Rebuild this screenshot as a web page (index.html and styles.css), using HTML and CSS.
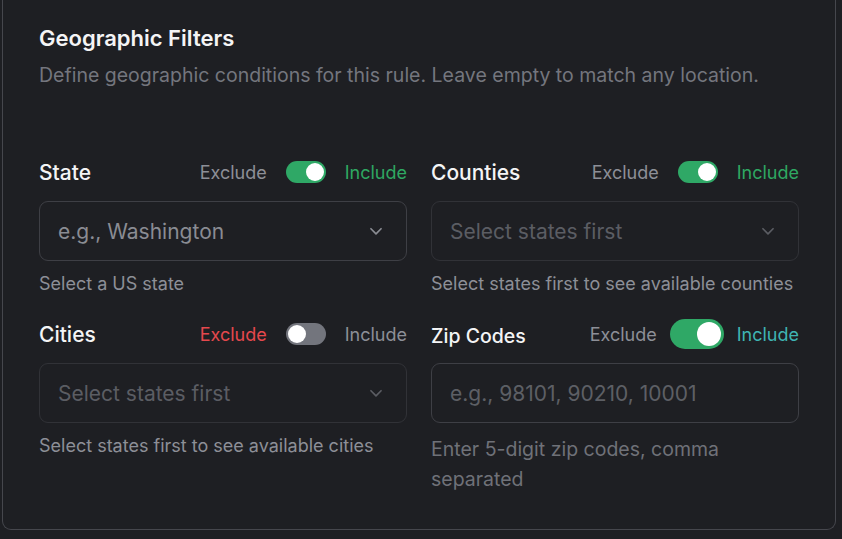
FILE: index.html
```html
<!DOCTYPE html>
<html lang="en">
<head>
<meta charset="utf-8">
<title>Geographic Filters</title>
<link rel="stylesheet" href="styles.css">
</head>
<body>
<section class="card">
  <header class="card-head">
    <h2 class="title">Geographic Filters</h2>
    <p class="subtitle">Define geographic conditions for this rule. Leave empty to match any location.</p>
  </header>
  <div class="grid">
    <div class="field">
      <div class="field-head">
        <span class="label">State</span>
        <div class="mode">
          <span class="mode-text">Exclude</span>
          <span class="toggle on"><span class="thumb"></span></span>
          <span class="mode-text green">Include</span>
        </div>
      </div>
      <div class="select">
        <span class="placeholder">e.g., Washington</span>
        <svg class="chev" width="18" height="18" viewBox="0 0 16 16" fill="none"><path d="M3.5 6l4.5 4.5L12.5 6" stroke="currentColor" stroke-width="1.5" stroke-linecap="round" stroke-linejoin="round"/></svg>
      </div>
      <p class="help">Select a US state</p>
    </div>

    <div class="field">
      <div class="field-head">
        <span class="label">Counties</span>
        <div class="mode">
          <span class="mode-text">Exclude</span>
          <span class="toggle on"><span class="thumb"></span></span>
          <span class="mode-text green">Include</span>
        </div>
      </div>
      <div class="select disabled">
        <span class="placeholder">Select states first</span>
        <svg class="chev" width="18" height="18" viewBox="0 0 16 16" fill="none"><path d="M3.5 6l4.5 4.5L12.5 6" stroke="currentColor" stroke-width="1.5" stroke-linecap="round" stroke-linejoin="round"/></svg>
      </div>
      <p class="help">Select states first to see available counties</p>
    </div>

    <div class="field">
      <div class="field-head">
        <span class="label">Cities</span>
        <div class="mode">
          <span class="mode-text red">Exclude</span>
          <span class="toggle off"><span class="thumb"></span></span>
          <span class="mode-text">Include</span>
        </div>
      </div>
      <div class="select disabled">
        <span class="placeholder">Select states first</span>
        <svg class="chev" width="18" height="18" viewBox="0 0 16 16" fill="none"><path d="M3.5 6l4.5 4.5L12.5 6" stroke="currentColor" stroke-width="1.5" stroke-linecap="round" stroke-linejoin="round"/></svg>
      </div>
      <p class="help">Select states first to see available cities</p>
    </div>

    <div class="field">
      <div class="field-head">
        <span class="label zip-label">Zip Codes</span>
        <div class="mode mode-lg">
          <span class="mode-text">Exclude</span>
          <span class="toggle on large"><span class="thumb"></span></span>
          <span class="mode-text teal">Include</span>
        </div>
      </div>
      <div class="select input">
        <span class="placeholder">e.g., 98101, 90210, 10001</span>
      </div>
      <p class="help help-lg">Enter 5-digit zip codes, comma separated</p>
    </div>
  </div>
</section>
</body>
</html>
```

FILE: styles.css
```css
* { box-sizing: border-box; }
html, body { margin: 0; padding: 0; background: #1e1f23; }
body {
  font-family: Inter, "Noto Sans", "Liberation Sans", sans-serif;
  color: #f2f2f3;
  padding: 0 6px 9px 2px;
}
.card {
  border: 1px solid #46474d;
  border-top: none;
  border-radius: 0 0 9px 9px;
  padding: 24px 36px 35px 36px;
  background: #1e1f23;
}
.card-head { margin-bottom: 70px; }
.title {
  margin: 0;
  font-size: 22px;
  line-height: 28px;
  font-weight: 600;
  color: #f4f4f5;
}
.subtitle {
  margin: 11px 0 0;
  font-size: 19.5px;
  line-height: 24px;
  color: #74767e;
}
.grid {
  display: grid;
  grid-template-columns: 1fr 1fr;
  column-gap: 24px;
  row-gap: 24px;
}
.field { display: flex; flex-direction: column; }
.field-head {
  display: flex;
  align-items: center;
  justify-content: space-between;
  height: 30px;
}
.label {
  font-size: 21px;
  font-weight: 500;
  color: #f4f4f5;
}
.zip-label { position: relative; top: 2px; font-size: 19.5px; }
.mode { display: flex; align-items: center; gap: 19px; }
.mode-lg { gap: 13px; }
.mode-text { font-size: 18px; color: #8d8f97; }
.mode-text.green { color: #2fa862; }
.mode-text.red { color: #e5484d; }
.mode-text.teal { color: #3fb5b3; }
.toggle {
  display: flex;
  align-items: center;
  width: 40px;
  height: 22px;
  border-radius: 11px;
  padding: 2px;
  background: #2fa866;
}
.toggle .thumb {
  width: 18px;
  height: 18px;
  border-radius: 50%;
  background: #ffffff;
}
.toggle.on { justify-content: flex-end; }
.toggle.off { justify-content: flex-start; background: #73757d; }
.toggle.large {
  width: 54px;
  height: 30px;
  border-radius: 15px;
  padding: 3px;
}
.toggle.large .thumb { width: 24px; height: 24px; }
.select {
  margin-top: 14px;
  height: 60px;
  border: 1px solid #3e3f45;
  border-radius: 9px;
  display: flex;
  align-items: center;
  justify-content: space-between;
  padding: 0 21px 0 18px;
  color: #8a8c93;
}
.select .placeholder { font-size: 21px; }
.select.disabled { border-color: #313237; color: #5b5d63; }
.select.disabled .chev { color: #5b5d63; }
.select.input { color: #5d5f65; }
.chev { color: #8a8c93; }
.help {
  margin: 12px 0 0;
  font-size: 18px;
  line-height: 22px;
  color: #8d8f97;
}
.help-lg {
  margin-top: 11px;
  font-size: 19.5px;
  line-height: 30px;
  color: #6f7178;
}
```
